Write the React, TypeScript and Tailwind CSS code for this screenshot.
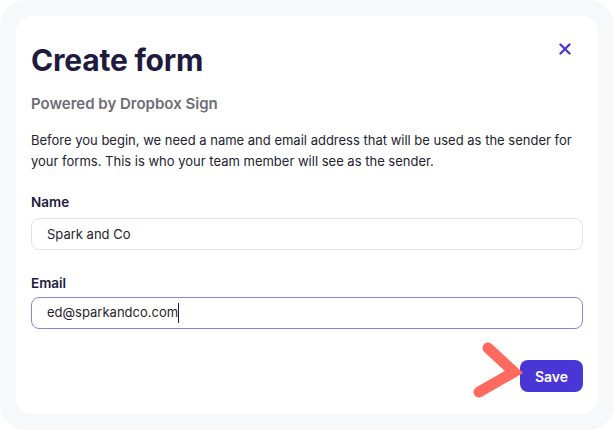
import { useState } from "react";

export default function App() {
  const [name, setName] = useState("Spark and Co");
  const [email, setEmail] = useState("ed@sparkandco.com");

  return (
    <div className="w-[614px] h-[430px] bg-white" style={{ fontFamily: "Inter, 'Noto Sans', sans-serif" }}>
      <div className="h-full rounded-[26px] bg-[#f7f8fa] p-4">
        <div className="relative h-[398px] rounded-[16px] bg-white px-[15px] pt-[24px]">
          {/* Close */}
          <button className="absolute right-[27px] top-[27px] text-[#4b37d4]" aria-label="Close">
            <svg width="12" height="12" viewBox="0 0 12 12" fill="none">
              <path d="M1.5 1.5l9 9M10.5 1.5l-9 9" stroke="currentColor" strokeWidth="2.4" strokeLinecap="round" />
            </svg>
          </button>

          <h1 className="text-[30px] leading-[40px] font-bold text-[#1e1b3f] tracking-[-0.2px]">Create form</h1>
          <p className="mt-[14px] text-[15px] leading-[20px] font-semibold text-[#6d6d75]">Powered by Dropbox Sign</p>
          <p className="mt-[16px] text-[13px] leading-[21px] text-[#23222e]">
            Before you begin, we need a name and email address that will be used as the sender for your forms. This is who your team member will see as the sender.
          </p>

          {/* Name */}
          <label className="block mt-[20px] text-[13.5px] leading-[20px] font-semibold text-[#1e1b3f]">Name</label>
          <input
            value={name}
            onChange={(e) => setName(e.target.value)}
            className="mt-[6px] block w-full h-[32px] rounded-[8px] border border-[#e3e3e6] px-[15px] text-[13px] text-[#1f1e2b] outline-none"
          />

          {/* Email */}
          <label className="block mt-[23px] text-[13.5px] leading-[20px] font-semibold text-[#1e1b3f]">Email</label>
          <div className="mt-[4px] flex items-center w-full h-[32px] rounded-[8px] border-[1.5px] border-[#8d84d8] px-[15px] text-[13px] text-[#1f1e2b]">
            <span className="whitespace-pre">{email}</span>
            <span className="w-px h-[20px] bg-[#1f1e2b]" />
          </div>

          <div className="mt-[31px] flex justify-end">
            <button
              onClick={() => setEmail(email)}
              className="h-[32px] w-[63px] rounded-[8px] bg-[#4a36d5] text-white text-[14px] font-semibold"
            >
              Save
            </button>
          </div>

          {/* Pointer arrow */}
          <svg className="absolute left-[455px] top-[323px]" width="60" height="70" viewBox="0 0 60 70" fill="none">
            <path d="M17 9 L43 33 L8 53" stroke="#ff6a5e" strokeWidth="11" strokeLinecap="round" strokeLinejoin="miter" />
          </svg>
        </div>
      </div>
    </div>
  );
}
